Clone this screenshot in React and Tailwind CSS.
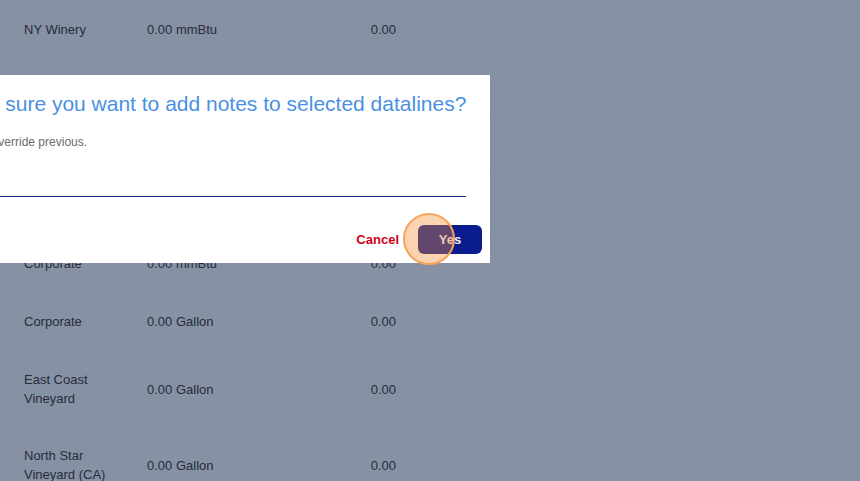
import React from 'react'

const rows = [
  { name: 'NY Winery', qty: '0.00 mmBtu', val: '0.00' },
  { name: '', qty: '', val: '' },
  { name: '', qty: '', val: '' },
  { name: '', qty: '', val: '' },
  { name: 'Corporate', qty: '0.00 mmBtu', val: '0.00' },
  { name: 'Corporate', qty: '0.00 Gallon', val: '0.00' },
  { name: 'East Coast Vineyard', qty: '0.00 Gallon', val: '0.00', two: true },
  { name: 'North Star Vineyard (CA)', qty: '0.00 Gallon', val: '0.00', two: true },
]

function Row({ row }) {
  return (
    <div className="flex items-center min-h-[58.5px] pt-[19px] pb-[18px] border-b border-[#828d9f] text-[13px] leading-[19px] text-[#262c3b]">
      <div className="w-[147px] pl-6 shrink-0">
        {row.two ? (
          <span className="block w-[95px]">{row.name}</span>
        ) : (
          row.name
        )}
      </div>
      <div className="w-[170px] shrink-0">{row.qty}</div>
      <div className="w-[79px] text-right shrink-0">{row.val}</div>
    </div>
  )
}

export default function App() {
  return (
    <div
      className="relative w-[860px] h-[481px] overflow-hidden bg-[#8691a3]"
      style={{ fontFamily: '"Liberation Sans", Arial, sans-serif' }}
    >
      <div className="flex flex-col">
        {rows.map((r, i) => (
          <Row key={i} row={r} />
        ))}
      </div>

      {/* modal */}
      <div className="absolute left-[-97px] top-[75px] w-[587px] h-[188px] bg-white">
        <div className="pl-6 pr-6 pt-[16px]">
          <h2 className="text-[21px] leading-[25px] text-[#4a90e2] font-normal whitespace-nowrap">
            Are you sure you want to add notes to selected datalines?
          </h2>
          <p className="mt-[18px] ml-[10px] text-[12px] leading-[16px] text-[#6b6b6b]">
            Notes will override previous.
          </p>
          <div className="mt-[16px] h-[31px] border-b border-[#1f2d8a]" />
        </div>
        <div className="flex items-center justify-end gap-[19px] pr-2 mt-[28px]">
          <button className="text-[13px] font-semibold text-[#d0021b]">Cancel</button>
          <button className="w-[64px] h-[29px] rounded-[6px] bg-[#0b1c8e] text-[13px] font-bold text-[#f0ecf5]">
            Yes
          </button>
        </div>
      </div>

      {/* click highlight */}
      <div className="absolute left-[403px] top-[213px] w-[52px] h-[52px] rounded-full border-2 border-[#f6a45c] bg-[rgba(245,140,50,0.38)]" />
    </div>
  )
}
